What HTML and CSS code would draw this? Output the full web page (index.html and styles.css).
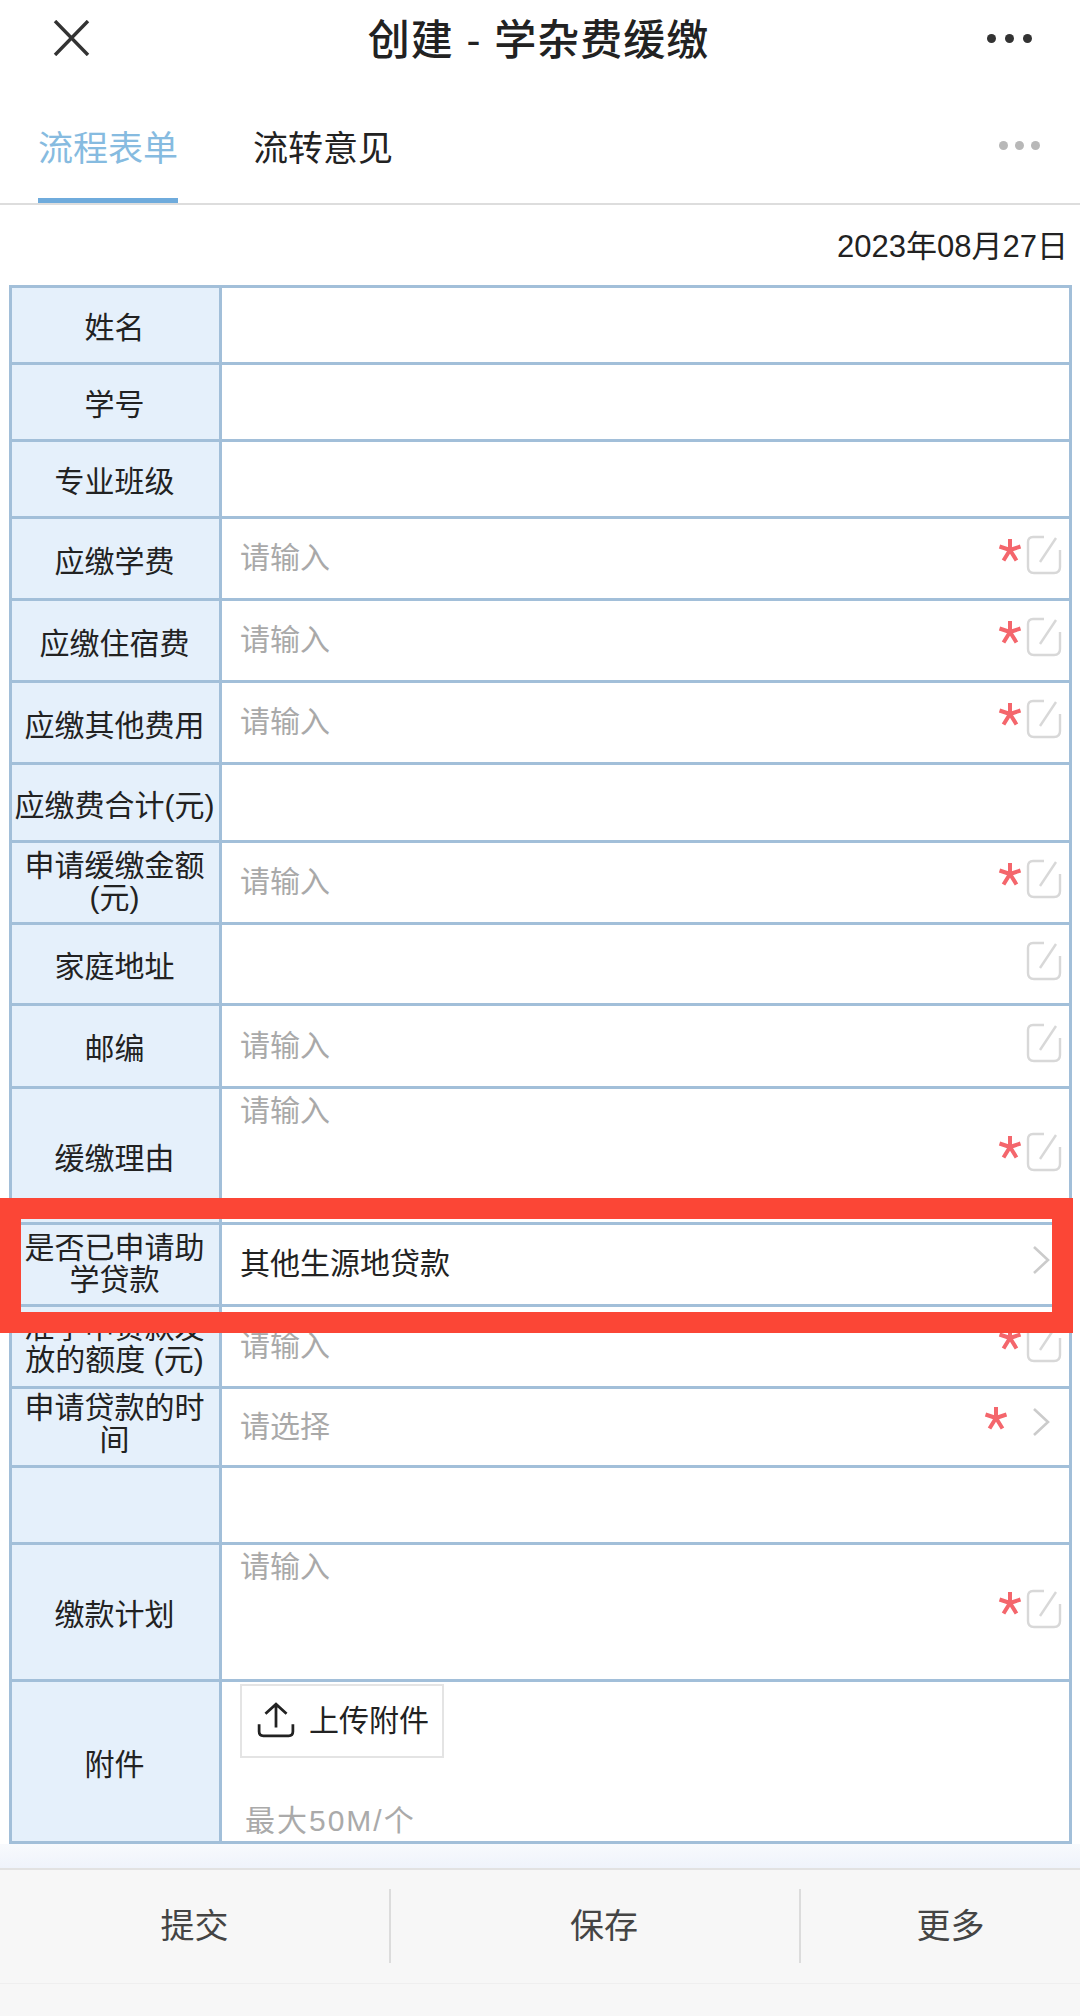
FILE: index.html
```html
<!DOCTYPE html>
<html lang="zh-CN">

<head>
    <meta charset="UTF-8">
    <meta name="viewport" content="width=device-width, initial-scale=1.0">
    <title>创建 - 学杂费缓缴</title>
    <link rel="stylesheet" href="styles.css">
</head>

<body>
    <svg class="defs" width="0" height="0">
        <symbol id="star" viewBox="0 0 24 24">
            <path d="M12 1V12M12 12L1.5 8.5M12 12L22.5 8.5M12 12L5.5 22.5M12 12L18.5 22.5" fill="none" stroke="#f4666c" stroke-width="4"/>
        </symbol>
        <symbol id="edit" viewBox="0 0 36 40">
            <path d="M18 2H7Q2 2 2 7V32Q2 38 8 38H28Q34 38 34 32V15" fill="none" stroke="#d8d8d8" stroke-width="2.4"/>
            <path d="M14 27L30 3" fill="none" stroke="#d8d8d8" stroke-width="2.4"/>
        </symbol>
        <symbol id="arrow" viewBox="0 0 18 28">
            <path d="M2 1L16 14L2 27" fill="none" stroke="#cbcbcb" stroke-width="2.6"/>
        </symbol>
    </svg>

    <div class="page">
        <header class="topbar">
            <svg class="close" viewBox="0 0 37 36">
                <path d="M2 1L35 35M35 1L2 35" fill="none" stroke="#333" stroke-width="3.4"/>
            </svg>
            <h1 class="title">创建 - 学杂费缓缴</h1>
            <div class="dots"><span></span><span></span><span></span></div>
        </header>

        <nav class="tabs">
            <span class="tab active">流程表单</span>
            <span class="tab">流转意见</span>
            <div class="dots small"><span></span><span></span><span></span></div>
        </nav>

        <div class="date">2023年08月27日</div>

        <table class="form">
            <tr class="h77"><th>姓名</th><td></td></tr>
            <tr class="h77"><th>学号</th><td></td></tr>
            <tr class="h77"><th>专业班级</th><td></td></tr>
            <tr class="h82"><th>应缴学费</th><td>
                <div class="field"><span class="hint">请输入</span><svg class="star"><use href="#star"/></svg><svg class="edit"><use href="#edit"/></svg></div>
            </td></tr>
            <tr class="h82"><th>应缴住宿费</th><td>
                <div class="field"><span class="hint">请输入</span><svg class="star"><use href="#star"/></svg><svg class="edit"><use href="#edit"/></svg></div>
            </td></tr>
            <tr class="h82"><th>应缴其他费用</th><td>
                <div class="field"><span class="hint">请输入</span><svg class="star"><use href="#star"/></svg><svg class="edit"><use href="#edit"/></svg></div>
            </td></tr>
            <tr class="h78"><th>应缴费合计(元)</th><td></td></tr>
            <tr class="h82"><th class="two">申请缓缴金额(元)</th><td>
                <div class="field"><span class="hint">请输入</span><svg class="star"><use href="#star"/></svg><svg class="edit"><use href="#edit"/></svg></div>
            </td></tr>
            <tr class="h81"><th>家庭地址</th><td>
                <div class="field"><span class="hint"></span><svg class="edit"><use href="#edit"/></svg></div>
            </td></tr>
            <tr class="h83"><th>邮编</th><td>
                <div class="field"><span class="hint">请输入</span><svg class="edit"><use href="#edit"/></svg></div>
            </td></tr>
            <tr class="h136"><th>缓缴理由</th><td>
                <div class="field tall"><span class="hint">请输入</span><svg class="star"><use href="#star"/></svg><svg class="edit"><use href="#edit"/></svg></div>
            </td></tr>
            <tr class="h82"><th class="two">是否已申请助学贷款</th><td>
                <div class="field"><span class="value">其他生源地贷款</span><svg class="arrow"><use href="#arrow"/></svg></div>
            </td></tr>
            <tr class="h82"><th class="two low">准予申贷款发放的额度 (元)</th><td>
                <div class="field"><span class="hint">请输入</span><svg class="star"><use href="#star"/></svg><svg class="edit"><use href="#edit"/></svg></div>
            </td></tr>
            <tr class="h79"><th class="two low">申请贷款的时间</th><td>
                <div class="field"><span class="hint">请选择</span><svg class="star wide"><use href="#star"/></svg><svg class="arrow"><use href="#arrow"/></svg></div>
            </td></tr>
            <tr class="h77"><th></th><td></td></tr>
            <tr class="h137"><th>缴款计划</th><td>
                <div class="field tall"><span class="hint">请输入</span><svg class="star"><use href="#star"/></svg><svg class="edit"><use href="#edit"/></svg></div>
            </td></tr>
            <tr class="h162"><th>附件</th><td>
                <div class="upload">
                    <button class="upload-btn" type="button">
                        <svg class="upload-icon" viewBox="0 0 36 34">
                            <path d="M18 24V2M8 11L18 2L28 11M2 21V28Q2 32 6 32H30Q34 32 34 28V21" fill="none" stroke="#222" stroke-width="2.6"/>
                        </svg>
                        <span class="upload-text">上传附件</span>
                    </button>
                    <span class="limit">最大50M/个</span>
                </div>
            </td></tr>
        </table>

        <div class="form-end"></div>

        <footer class="actions">
            <div class="action-row">
                <span class="action">提交</span>
                <span class="action mid">保存</span>
                <span class="action last">更多</span>
            </div>
        </footer>

        <!-- 红框标注 -->
        <div class="mark"></div>
    </div>
</body>

</html>
```

FILE: styles.css
```css
* {
    margin: 0;
    padding: 0;
    box-sizing: border-box;
}

body {
    background-color: white;
    font-family: "Liberation Sans", "Noto Sans CJK SC", sans-serif;
    color: #222;
}

.defs {
    display: block;
}

.page {
    position: relative;
    width: 1080px;
    height: 2016px;
    overflow: hidden;
}

.topbar {
    display: flex;
    align-items: center;
    justify-content: space-between;
    height: 76px;
    padding: 0 48px 0 53px;
}

.close {
    width: 37px;
    height: 36px;
}

.title {
    padding-top: 5px;
    font-size: 42px;
    font-weight: 500;
    line-height: 50px;
    letter-spacing: 1px;
}

.dots {
    display: flex;
    gap: 9px;
}

.dots span {
    width: 9px;
    height: 9px;
    border-radius: 50%;
    background-color: #333;
}

.dots.small {
    gap: 7px;
    margin-left: auto;
    margin-top: 65px;
}

.dots.small span {
    width: 9px;
    height: 9px;
    background-color: #b8b8b8;
}

.tabs {
    display: flex;
    align-items: flex-start;
    gap: 75px;
    height: 129px;
    padding: 0 40px 0 38px;
    border-bottom: 2px solid #ddd;
}

.tab {
    height: 127px;
    padding-top: 48px;
    font-size: 35px;
    line-height: 50px;
}

.tab.active {
    color: #86bbe0;
    border-bottom: 5px solid #6fabdc;
}

.date {
    height: 80px;
    padding: 22px 12px 0 0;
    font-size: 31px;
    line-height: 40px;
    text-align: right;
}

.form {
    width: 1063px;
    margin-left: 9px;
    table-layout: fixed;
    border-collapse: collapse;
    font-size: 30px;
    line-height: 32px;
}

.form th,
.form td {
    border: 3px solid #a2bfd9;
}

.form th {
    width: 210px;
    padding: 6px 3px 0 1px;
    font-weight: 400;
    text-align: center;
    background-color: #e5f0fb;
}

.form th.two {
    padding-top: 0;
    padding-bottom: 1px;
}

.form th.low {
    padding-bottom: 6px;
}

.form td {
    padding: 0 7px 0 18px;
}

.h77 { height: 77px; }
.h78 { height: 78px; }
.h79 { height: 79px; }
.h81 { height: 81px; }
.h82 { height: 82px; }
.h83 { height: 83px; }
.h136 { height: 136px; }
.h137 { height: 137px; }
.h162 { height: 162px; }

.field {
    display: flex;
    align-items: center;
}

.field .hint,
.field .value {
    flex: 1;
    margin-bottom: 1px;
}

.hint {
    color: #a9a9a9;
}

.star {
    width: 24px;
    height: 24px;
    margin: -18px 4px 0 0;
}

.star.wide {
    margin-right: 24px;
}

.edit {
    width: 36px;
    height: 40px;
    margin-top: -7px;
}

.arrow {
    width: 18px;
    height: 28px;
    margin: -10px 12px 0 0;
}

.field.tall {
    height: 130px;
}

.field.tall .hint {
    align-self: flex-start;
    margin-top: 4px;
}

.upload {
    display: flex;
    flex-direction: column;
    align-items: flex-start;
    height: 158px;
    padding-top: 1px;
}

.upload-btn {
    display: flex;
    align-items: center;
    gap: 14px;
    width: 204px;
    height: 74px;
    padding: 0 0 0 15px;
    border: 2px solid #e4e4e4;
    background-color: white;
    color: #222;
    font: inherit;
}

.upload-icon {
    width: 38px;
    height: 36px;
    margin-top: -2px;
}

.limit {
    margin: auto 0 1px 5px;
    color: #aaa;
    font-size: 30px;
    line-height: 38px;
    letter-spacing: 2px;
}

.form-end {
    height: 24px;
    background: linear-gradient(#f8fafd, #eff3fb);
}

.actions {
    height: 150px;
    background-color: #f7f7f7;
    border-top: 2px solid #e2e2e2;
}

.action-row {
    display: grid;
    grid-template-columns: 389px 410px 281px;
    height: 114px;
    padding-top: 19px;
    border-bottom: 1px solid #efefef;
}

.action {
    height: 74px;
    font-size: 34px;
    line-height: 74px;
    text-align: center;
    color: #444;
}

.action.mid,
.action.last {
    border-left: 2px solid #dcdcdc;
}

.action.mid {
    padding-left: 18px;
}

.action.last {
    padding-left: 20px;
}

.mark {
    position: absolute;
    top: 1198px;
    left: 0;
    width: 1073px;
    height: 135px;
    border: 21px solid #fb4636;
}
```
